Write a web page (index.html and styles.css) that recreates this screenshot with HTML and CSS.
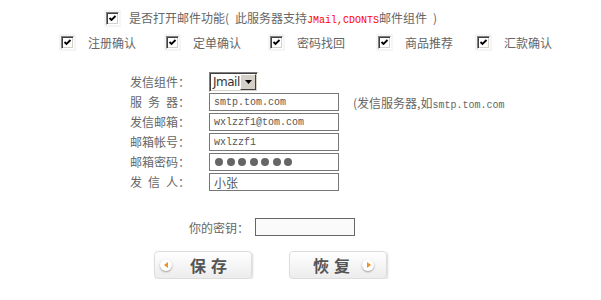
FILE: index.html
```html
<!DOCTYPE html>
<html lang="zh">
<head>
  <meta charset="UTF-8" />
  <title>邮件设置</title>
  <link rel="stylesheet" href="styles.css">
</head>
<body>
  <div class="page">
    <div class="main-opt">
      <span class="cb"><svg width="11" height="11" viewBox="0 0 11 11"><polyline points="2.5,5 4.5,7 8.5,3" /></svg></span>
      <span class="main-text">是否打开邮件功能(&ensp;此服务器支持<span class="red">JMail,CDONTS</span>邮件组件&ensp;)</span>
    </div>

    <div class="opts">
      <label class="opt"><span class="cb"><svg width="11" height="11" viewBox="0 0 11 11"><polyline points="2.5,5 4.5,7 8.5,3" /></svg></span>注册确认</label>
      <label class="opt"><span class="cb"><svg width="11" height="11" viewBox="0 0 11 11"><polyline points="2.5,5 4.5,7 8.5,3" /></svg></span>定单确认</label>
      <label class="opt"><span class="cb"><svg width="11" height="11" viewBox="0 0 11 11"><polyline points="2.5,5 4.5,7 8.5,3" /></svg></span>密码找回</label>
      <label class="opt"><span class="cb"><svg width="11" height="11" viewBox="0 0 11 11"><polyline points="2.5,5 4.5,7 8.5,3" /></svg></span>商品推荐</label>
      <label class="opt"><span class="cb"><svg width="11" height="11" viewBox="0 0 11 11"><polyline points="2.5,5 4.5,7 8.5,3" /></svg></span>汇款确认</label>
    </div>

    <div class="mail-form">
      <div class="row">
        <span class="lbl">发信组件：</span>
        <div class="sel">
          <span class="sel-text">Jmail</span>
          <span class="sel-btn"><svg width="7" height="4" viewBox="0 0 7 4"><polygon points="0,0 7,0 3.5,4" /></svg></span>
        </div>
      </div>
      <div class="row">
        <span class="lbl">服&ensp;务&ensp;器：</span>
        <input class="field" type="text" value="smtp.tom.com">
        <span class="hint">(发信服务器,如<span class="mono">smtp.tom.com</span></span>
      </div>
      <div class="row">
        <span class="lbl">发信邮箱：</span>
        <input class="field" type="text" value="wxlzzf1@tom.com">
      </div>
      <div class="row">
        <span class="lbl">邮箱帐号：</span>
        <input class="field" type="text" value="wxlzzf1">
      </div>
      <div class="row">
        <span class="lbl">邮箱密码：</span>
        <div class="field pwd">
          <span class="dot"></span><span class="dot"></span><span class="dot"></span><span class="dot"></span><span class="dot"></span><span class="dot"></span><span class="dot"></span>
        </div>
      </div>
      <div class="row">
        <span class="lbl">发&ensp;信&ensp;人：</span>
        <input class="field cn" type="text" value="小张">
      </div>
    </div>

    <div class="key-row">
      <span class="key-lbl">你的密钥：</span>
      <input class="field key" type="text" value="">
    </div>

    <div class="btns">
      <a class="btn btn-save"><span class="circle"><span class="arrow-left"></span></span><span class="btn-text">保存</span></a>
      <a class="btn btn-reset"><span class="btn-text">恢复</span><span class="circle"><span class="arrow-right"></span></span></a>
    </div>
  </div>
</body>
</html>
```

FILE: styles.css
```css
body { margin: 0; font-family: "Noto Sans CJK SC", "Noto Sans", sans-serif; font-size: 12px; color: #666; background: #fff; }

/* checkbox, classic sunken look */
.cb {
  display: inline-block; width: 11px; height: 11px; flex: none;
  border: 1px solid; border-color: #808080 #fff #fff #808080;
  background: #fff;
  box-shadow: inset 1px 1px #404040, inset -1px -1px #d4d0c8, 0 0 0 2px #f5f5f5;
}
.cb svg { display: block; }
.cb polyline { fill: none; stroke: #000; stroke-width: 1.8; }

.main-opt { display: flex; align-items: center; height: 13px; margin-top: 12px; padding-left: 106px; line-height: 13px; }
.main-opt .cb { margin-right: 10px; }
.red { color: #f00; font-family: "Liberation Mono", monospace; font-size: 10px; }

.opts { display: grid; grid-template-columns: 105px 104px 108px 99px auto; margin-top: 11px; padding-left: 61px; }
.opt { display: flex; align-items: center; height: 13px; line-height: 13px; }
.opt .cb { margin-right: 14px; }

.mail-form { margin-top: 23px; padding-left: 130px; }
.row { display: flex; align-items: center; height: 20px; }
.lbl { width: 79px; line-height: 14px; }

.sel {
  box-sizing: border-box; width: 49px; height: 20px; display: flex; align-items: center;
  border: 1px solid; border-color: #808080 #fff #fff #808080;
  box-shadow: inset 1px 1px #404040, inset -1px -1px #d4d0c8;
  background: #fff; padding: 1px;
}
.sel-text { flex: 1; padding-left: 2px; font-family: "DejaVu Sans", sans-serif; font-size: 12px; color: #333; letter-spacing: -0.5px; }
.sel-btn {
  box-sizing: border-box; width: 16px; height: 16px; display: flex; align-items: center; justify-content: center;
  background: #d4d0c8; border: 1px solid; border-color: #fff #404040 #404040 #fff;
}
.sel-btn svg { display: block; }

.field {
  box-sizing: border-box; width: 130px; height: 18px; margin: 0; padding: 0 0 0 4px;
  border: 1px solid #777; background: #fff; outline: none;
  font-family: "Liberation Mono", monospace; font-size: 10px; color: #555;
}
.field.cn { font-family: "Noto Sans CJK SC", sans-serif; font-size: 12px; }
.pwd { display: flex; align-items: center; gap: 3.5px; padding-left: 5px; }
.dot { width: 8px; height: 8px; border-radius: 50%; background: #666; }

.hint { margin-left: 14px; }
.mono { font-family: "Liberation Mono", monospace; font-size: 10px; }

.key-row { display: flex; align-items: center; height: 18px; margin-top: 26px; padding-left: 189px; }
.key-lbl { width: 66px; }
.field.key { width: 100px; background: #fafafa; border-color: #666; }

.btns { display: flex; gap: 37px; margin-top: 15px; padding-left: 154px; }
.btn {
  box-sizing: border-box; width: 98px; height: 28px; display: flex; align-items: center;
  border: 1px solid #ddd; border-radius: 4px;
  background: linear-gradient(#fff, #ececec);
  box-shadow: 1px 1px 2px rgba(0,0,0,0.15);
  font-size: 16px; font-weight: bold; color: #555; letter-spacing: 5px; cursor: pointer;
}
.btn-save { padding-left: 5px; }
.btn-save .btn-text { margin-left: 18px; }
.btn-reset { padding-left: 23px; }
.btn-reset .btn-text { margin-right: 7px; }
.circle {
  width: 12px; height: 12px; border-radius: 50%; background: #fff; flex: none;
  box-shadow: 0 1px 2px rgba(0,0,0,0.35);
  display: flex; align-items: center; justify-content: center;
}
.arrow-left { width: 0; height: 0; border-top: 3px solid transparent; border-bottom: 3px solid transparent; border-right: 4px solid #f39020; margin-left: -1px; }
.arrow-right { width: 0; height: 0; border-top: 3px solid transparent; border-bottom: 3px solid transparent; border-left: 4px solid #f39020; margin-left: 1px; }
```
